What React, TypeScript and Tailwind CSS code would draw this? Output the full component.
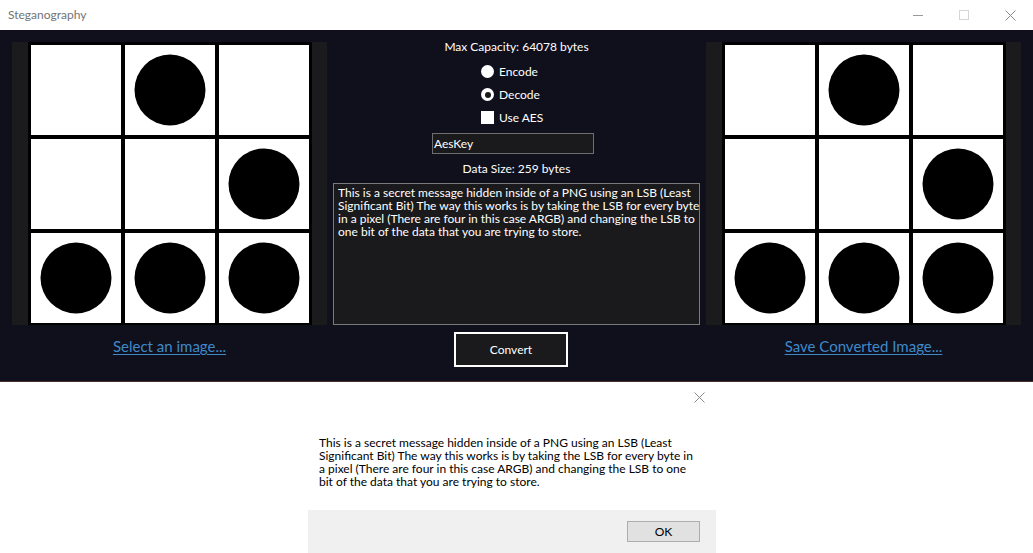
const font = { fontFamily: "Lato, 'Noto Sans', sans-serif" };

// glider pattern, 1 = dot
const cells = [
  [0, 1, 0],
  [0, 0, 1],
  [1, 1, 1],
];

function GliderImage() {
  return (
    <svg width="284" height="283" viewBox="0 0 284 283">
      <rect x="0" y="0" width="284" height="283" fill="#000" />
      {cells.map((row, r) =>
        row.map((on, c) => {
          const x = 3 + c * 94;
          const y = 3 + r * 94;
          return (
            <g key={`${r}-${c}`}>
              <rect x={x} y={y} width="90" height="90" fill="#fff" />
              {on === 1 && <circle cx={x + 45} cy={y + 45} r="35.5" fill="#000" />}
            </g>
          );
        }),
      )}
    </svg>
  );
}

function ImagePanel({ link }: { link: string }) {
  return (
    <div className="flex flex-col items-center pt-[12px]">
      <div className="flex h-[283px] w-[315px] justify-center bg-[#1b1b1d]">
        <GliderImage />
      </div>
      <a className="mt-[11px] h-[20px] text-[15px] leading-[20px] text-[#3f89c9] underline underline-offset-2">
        {link}
      </a>
    </div>
  );
}

const message = [
  "This is a secret message hidden inside of a PNG using an LSB (Least",
  "Significant Bit) The way this works is by taking the LSB for every byte",
  "in a pixel (There are four in this case ARGB) and changing the LSB to",
  "one bit of the data that you are trying to store.",
];

const dialogLines = [
  "This is a secret message hidden inside of a PNG using an LSB (Least",
  "Significant Bit) The way this works is by taking the LSB for every byte in",
  "a pixel (There are four in this case ARGB) and changing the LSB to one",
  "bit of the data that you are trying to store.",
];

export default function App() {
  return (
    <div className="flex h-[553px] w-[1033px] flex-col overflow-hidden bg-white" style={font}>
      {/* title bar */}
      <div className="flex h-[30px] items-center bg-white">
        <span className="pl-[8px] text-[12px] text-[#737373]">Steganography</span>
        <div className="ml-auto flex h-full items-center">
          <div className="flex w-[46px] items-center justify-center">
            <div className="h-px w-[10px] bg-[#9a9a9a]" />
          </div>
          <div className="flex w-[46px] items-center justify-center">
            <div className="h-[10px] w-[10px] border border-[#d6d6d6]" />
          </div>
          <div className="flex w-[46px] items-center justify-center">
            <svg width="11" height="11" viewBox="0 0 11 11">
              <path d="M0.5 0.5 L10.5 10.5 M10.5 0.5 L0.5 10.5" stroke="#8a8a8a" strokeWidth="1" />
            </svg>
          </div>
        </div>
      </div>

      {/* main window */}
      <div className="flex h-[352px] border-b border-[#4a302b] bg-[#10101c] pl-[12px] text-white">
        <ImagePanel link="Select an image..." />

        <div className="ml-[6px] flex w-[367px] flex-col items-center pt-[9px]">
          <div className="h-[16px] text-[12px] leading-[16px]">Max Capacity: 64078 bytes</div>
          <div className="mt-[5px] flex w-full flex-col pl-[148px] text-[12px]">
            <div className="flex h-[23px] items-center gap-[5px]">
              <span className="h-[13px] w-[13px] rounded-full bg-white" />
              <span>Encode</span>
            </div>
            <div className="flex h-[23px] items-center gap-[5px]">
              <span className="flex h-[13px] w-[13px] items-center justify-center rounded-full bg-white">
                <span className="h-[6px] w-[6px] rounded-full bg-[#1a1a1c]" />
              </span>
              <span>Decode</span>
            </div>
            <div className="flex h-[23px] items-center gap-[5px]">
              <span className="h-[13px] w-[13px] bg-white" />
              <span>Use AES</span>
            </div>
          </div>
          <div className="mt-[4px] flex h-[21px] w-[162px] items-center self-start ml-[99px] border border-[#6e6e6e] bg-[#1a1a1c] pl-[1px] text-[12px]">
            AesKey
          </div>
          <div className="mt-[7px] h-[16px] text-[12px] leading-[16px]">Data Size: 259 bytes</div>
          <div className="mt-[6px] h-[142px] w-[367px] border border-[#7a7a7a] bg-[#1a1a1c] px-[4px] pt-[2px] text-[12px] leading-[13px]">
            {message.map((l) => (
              <div key={l} className="whitespace-nowrap">
                {l}
              </div>
            ))}
          </div>
          <button className="mt-[7px] ml-[121px] flex h-[35px] w-[114px] items-center justify-center self-start border-2 border-white bg-[#1a1a1c] text-[12px] text-white">
            Convert
          </button>
        </div>

        <div className="ml-[6px]">
          <ImagePanel link="Save Converted Image..." />
        </div>
      </div>

      {/* message box */}
      <div className="ml-[308px] flex w-[408px] flex-1 flex-col">
        <div className="flex h-[128px] flex-col">
          <div className="flex justify-end pr-[11px] pt-[10px]">
            <svg width="11" height="11" viewBox="0 0 11 11">
              <path d="M0.5 0.5 L10.5 10.5 M10.5 0.5 L0.5 10.5" stroke="#8a8a8a" strokeWidth="1" />
            </svg>
          </div>
          <div className="mt-[33px] pl-[11px] text-[12px] leading-[13px] text-black">
            {dialogLines.map((l) => (
              <div key={l} className="whitespace-nowrap">
                {l}
              </div>
            ))}
          </div>
        </div>
        <div className="flex flex-1 justify-end bg-[#f0f0f0] pr-[16px] pt-[11px]">
          <button className="flex h-[21px] w-[73px] items-center justify-center border border-[#adadad] bg-[#e1e1e1] text-[12px] text-black">
            OK
          </button>
        </div>
      </div>
    </div>
  );
}
